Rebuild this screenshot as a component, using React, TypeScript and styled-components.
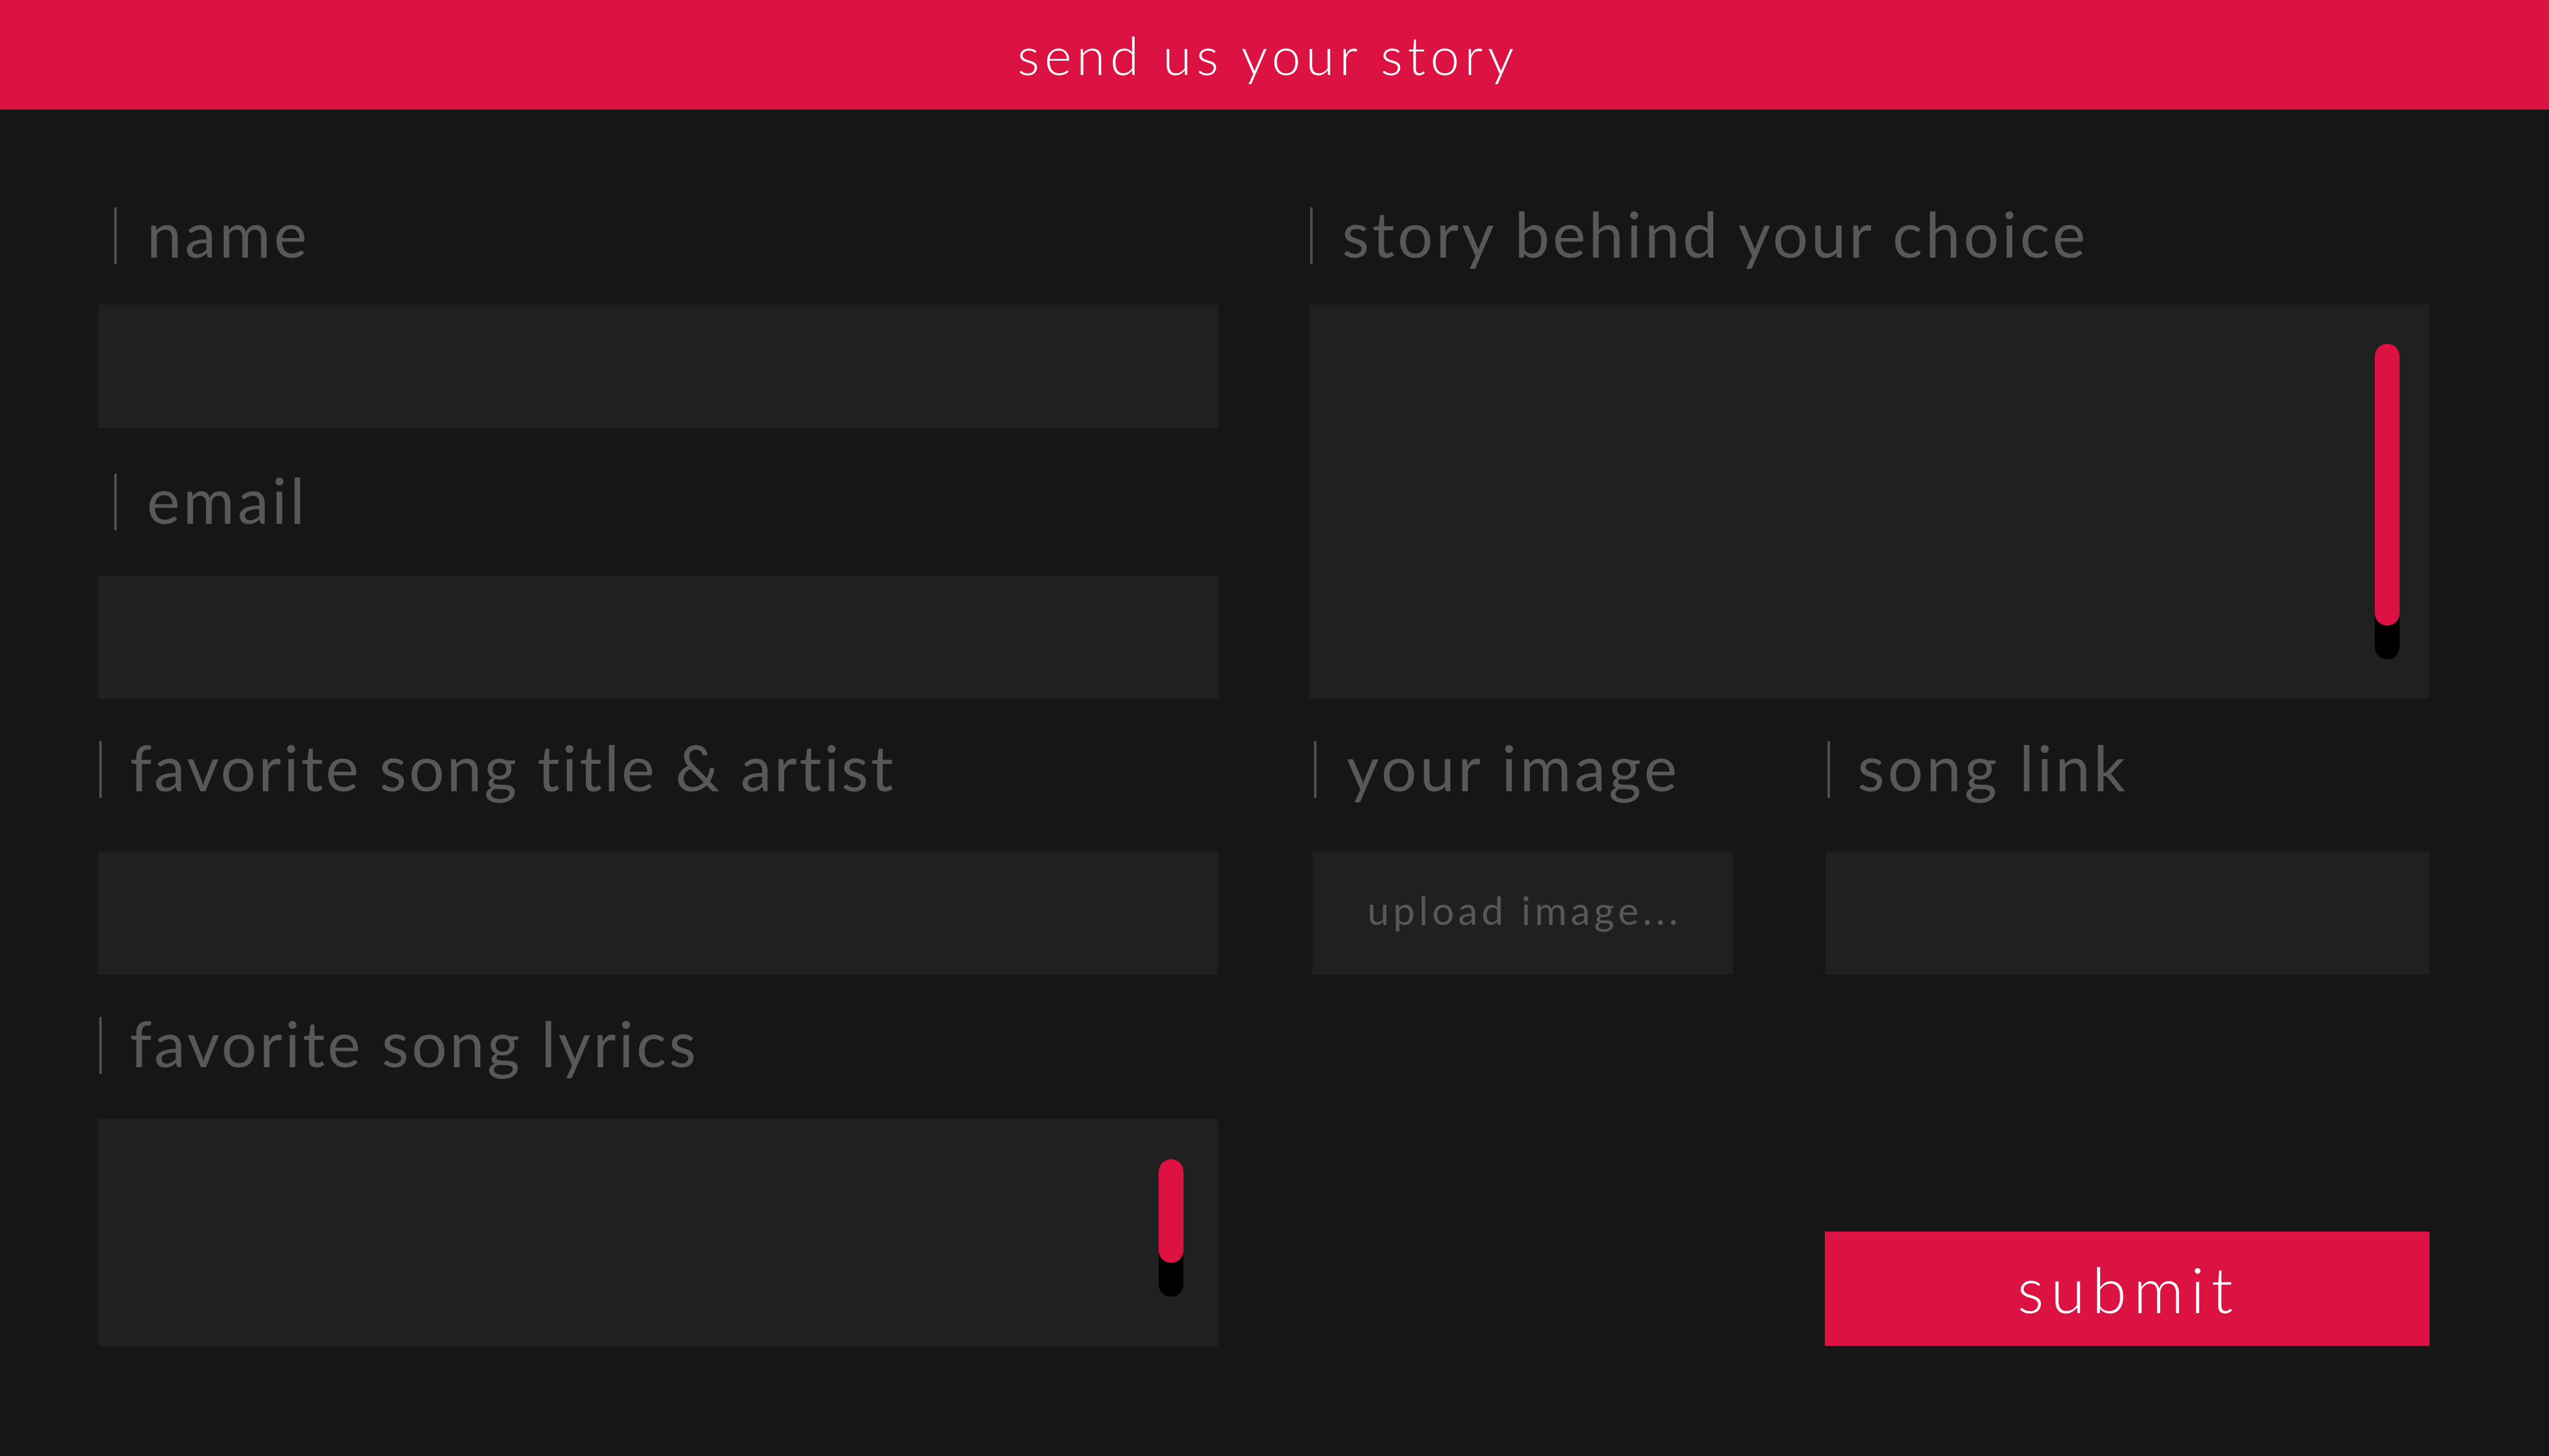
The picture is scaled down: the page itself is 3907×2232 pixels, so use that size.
import React from "react";
import styled, { createGlobalStyle } from "styled-components";

const RED = "#dc1242";
const BG = "#161616";
const FIELD = "#202020";
const MUTED = "#58585a";

const GlobalStyle = createGlobalStyle`
  html, body { margin: 0; padding: 0; background: ${BG}; }
  body { font-family: Lato, "Noto Sans", sans-serif; }
  * { box-sizing: border-box; }
`;

const Page = styled.div`
  width: 3907px;
  height: 2232px;
  background: ${BG};
  display: flex;
  flex-direction: column;
  overflow: hidden;
`;

const Header = styled.header`
  flex: none;
  height: 168px;
  background: ${RED};
  display: flex;
  align-items: center;
  justify-content: center;
`;

const HeaderTitle = styled.h1`
  margin: 0 20px 0 0;
  font: 300 80px/normal Lato, "Noto Sans", sans-serif;
  color: #ffffff;
  letter-spacing: 7.5px;
`;

const Form = styled.form`
  display: grid;
  grid-template-columns: 1717px 1717px;
  column-gap: 140px;
  padding: 150px 0 0 150px;
  align-items: start;
`;

const Column = styled.div`
  display: flex;
  flex-direction: column;
`;

const Label = styled.label<{ $indent: number; $gap: number; $mt?: number }>`
  display: flex;
  align-items: center;
  height: 87px;
  margin-top: ${(p) => p.$mt ?? 0}px;
  padding-left: ${(p) => p.$indent}px;
  gap: ${(p) => p.$gap}px;
`;

const Bar = styled.span`
  flex: none;
  width: 4px;
  align-self: stretch;
  background: #4e4e50;
`;

const LabelText = styled.span<{ $tracking: number }>`
  font: 400 96px/1 Lato, "Noto Sans", sans-serif;
  color: ${MUTED};
  letter-spacing: ${(p) => p.$tracking}px;
  white-space: nowrap;
  margin-bottom: 8px;
`;

const TextInput = styled.input<{ $mt: number }>`
  display: block;
  width: 100%;
  height: 189px;
  margin: ${(p) => p.$mt}px 0 0;
  padding: 0 40px;
  border: 0;
  outline: 0;
  background: ${FIELD};
  color: #9a9a9a;
  font: 400 60px Lato, "Noto Sans", sans-serif;
`;

const AreaBox = styled.div<{ $h: number; $mt: number }>`
  position: relative;
  height: ${(p) => p.$h}px;
  margin-top: ${(p) => p.$mt}px;
  background: ${FIELD};
`;

const Area = styled.textarea`
  display: block;
  width: 100%;
  height: 100%;
  padding: 40px 120px 40px 40px;
  border: 0;
  outline: 0;
  resize: none;
  overflow: hidden;
  background: transparent;
  color: #9a9a9a;
  font: 400 60px Lato, "Noto Sans", sans-serif;
`;

const Track = styled.div<{ $top: number; $right: number; $h: number }>`
  position: absolute;
  top: ${(p) => p.$top}px;
  right: ${(p) => p.$right}px;
  width: 38px;
  height: ${(p) => p.$h}px;
  border-radius: 19px;
  background: #000;
`;

const Thumb = styled.div<{ $h: number }>`
  height: ${(p) => p.$h}px;
  border-radius: 19px;
  background: ${RED};
`;

const SplitRow = styled.div`
  display: grid;
  grid-template-columns: 644px 926px;
  column-gap: 142px;
  margin-top: 65px;
  padding-left: 5px;
`;

const UploadBox = styled.label`
  display: flex;
  align-items: center;
  justify-content: center;
  height: 189px;
  margin-top: 82px;
  padding-bottom: 10px;
  background: ${FIELD};
  cursor: pointer;
  input { display: none; }
`;

const UploadText = styled.span`
  margin-left: 6px;
  font: 400 60px/normal Lato, "Noto Sans", sans-serif;
  color: ${MUTED};
  letter-spacing: 6px;
`;

const SubmitButton = styled.button`
  align-self: flex-end;
  width: 927px;
  height: 175px;
  margin-top: 394px;
  padding: 0 0 0 4px;
  border: 0;
  background: ${RED};
  color: #fff;
  font: 300 96px/normal Lato, "Noto Sans", sans-serif;
  letter-spacing: 10.5px;
  cursor: pointer;
`;

type FieldLabelProps = { text: string; indent: number; gap: number; mt?: number; tracking?: number };

const FieldLabel = ({ text, indent, gap, mt, tracking = 4.8 }: FieldLabelProps) => (
  <Label $indent={indent} $gap={gap} $mt={mt}>
    <Bar />
    <LabelText $tracking={tracking}>{text}</LabelText>
  </Label>
);

const Scroll = ({ top, right, track, thumb }: { top: number; right: number; track: number; thumb: number }) => (
  <Track $top={top} $right={right} $h={track}>
    <Thumb $h={thumb} />
  </Track>
);

export default function App() {
  return (
    <Page>
      <GlobalStyle />
      <Header>
        <HeaderTitle>send us your story</HeaderTitle>
      </Header>
      <Form onSubmit={(e) => e.preventDefault()}>
        <Column>
          <FieldLabel text="name" indent={25} gap={46} />
          <TextInput $mt={62} type="text" aria-label="name" />
          <FieldLabel text="email" indent={25} gap={46} mt={70} />
          <TextInput $mt={69} type="email" aria-label="email" />
          <FieldLabel text="favorite song title & artist" indent={2} gap={43} mt={65} tracking={3.6} />
          <TextInput $mt={82} type="text" aria-label="favorite song title & artist" />
          <FieldLabel text="favorite song lyrics" indent={2} gap={43} mt={65} tracking={4} />
          <AreaBox $h={349} $mt={69}>
            <Area aria-label="favorite song lyrics" />
            <Scroll top={62} right={53} track={211} thumb={159} />
          </AreaBox>
        </Column>
        <Column>
          <FieldLabel text="story behind your choice" indent={1} gap={45} tracking={4.6} />
          <AreaBox $h={604} $mt={62}>
            <Area aria-label="story behind your choice" />
            <Scroll top={60} right={46} track={484} thumb={432} />
          </AreaBox>
          <SplitRow>
            <Column>
              <FieldLabel text="your image" indent={2} gap={46} />
              <UploadBox>
                <input type="file" accept="image/*" />
                <UploadText>upload image...</UploadText>
              </UploadBox>
            </Column>
            <Column>
              <FieldLabel text="song link" indent={3} gap={42} />
              <TextInput $mt={82} type="url" aria-label="song link" />
            </Column>
          </SplitRow>
          <SubmitButton type="submit">submit</SubmitButton>
        </Column>
      </Form>
    </Page>
  );
}
